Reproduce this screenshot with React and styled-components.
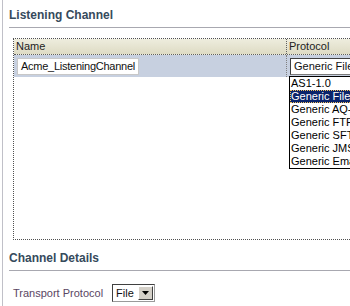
import React from 'react';
import styled, { createGlobalStyle } from 'styled-components';

const Global = createGlobalStyle`
  html, body { margin: 0; padding: 0; background: #fff; }
  body { font-family: "Liberation Sans", Arial, sans-serif; font-size: 11px; }
`;

const Page = styled.div`
  margin-left: 2px;
  border-left: 1px solid #c0c0c8;
  padding-left: 6px;
  height: 306px;
  box-sizing: border-box;
  overflow: hidden;
`;

const Heading = styled.div`
  font-weight: bold;
  font-size: 12px;
  color: #364a5c;
  padding-top: ${({ top }) => top}px;
  padding-bottom: 4px;
  border-bottom: 1px solid #a8a8b0;
  line-height: 15px;
  white-space: nowrap;
`;

const Table = styled.div`
  position: relative;
  margin: 10px 0 0 4px;
  height: 202px;
  border: 1px dotted #505050;
  border-right: none;
  box-sizing: border-box;
`;

const HeaderRow = styled.div`
  display: flex;
  height: 15px;
  background: linear-gradient(#eeedde, #dedbc4);
  border-bottom: 1px dotted #606060;
`;

const HeadCell = styled.div`
  width: ${({ w }) => (w ? `${w}px` : 'auto')};
  flex: ${({ w }) => (w ? 'none' : 1)};
  padding-left: 2px;
  line-height: 15px;
  color: #222;
  border-right: ${({ divider }) => (divider ? '1px dotted #606060' : 'none')};
  box-sizing: border-box;
`;

const DataRow = styled.div`
  display: flex;
  height: 22px;
  background: #c7d0e0;
`;

const Cell = styled.div`
  width: ${({ w }) => (w ? `${w}px` : 'auto')};
  flex: ${({ w }) => (w ? 'none' : 1)};
  padding: 3px 0 0 3px;
  box-sizing: border-box;
  border-right: ${({ divider }) => (divider ? '1px dotted #808080' : 'none')};
`;

const TextInput = styled.div`
  width: 122px;
  height: 17px;
  background: #fff;
  border: 1px solid #c8c8c8;
  box-sizing: border-box;
  padding-left: 3px;
  line-height: 15px;
  letter-spacing: -0.25px;
  color: #111;
  white-space: nowrap;
`;

const SelectBox = styled.div`
  width: 80px;
  height: 17px;
  background: #fff;
  border: 1px solid #7a7a7a;
  border-top-color: #404040;
  border-left-color: #404040;
  box-sizing: border-box;
  padding-left: 3px;
  line-height: 15px;
  color: #111;
  white-space: nowrap;
  overflow: hidden;
`;

const List = styled.div`
  position: absolute;
  left: 275px;
  top: 37px;
  width: 80px;
  background: #fff;
  border: 1px solid #000;
  z-index: 2;
`;

const Option = styled.div`
  height: 13px;
  line-height: 13px;
  padding-left: 1px;
  white-space: nowrap;
  overflow: hidden;
  color: ${({ selected }) => (selected ? '#fff' : '#000')};
  background: ${({ selected }) => (selected ? '#0a246a' : 'transparent')};
  outline: ${({ selected }) => (selected ? '1px dotted #f0c060' : 'none')};
  outline-offset: -1px;
`;

const FieldRow = styled.div`
  display: flex;
  align-items: center;
  gap: 9px;
  margin: 13px 0 0 4px;
`;

const Label = styled.span`
  color: #5a4663;
`;

const Combo = styled.div`
  display: flex;
  align-items: center;
  height: 18px;
  border: 1px solid #404040;
  border-right-color: #9a9a9a;
  border-bottom-color: #9a9a9a;
  box-sizing: border-box;
  background: #fff;
`;

const ComboText = styled.span`
  padding: 0 4px 0 3px;
  color: #111;
`;

const ComboButton = styled.div`
  width: 15px;
  height: 14px;
  margin-right: 1px;
  background: #d4d0c8;
  border: 1px solid #fff;
  border-right-color: #404040;
  border-bottom-color: #404040;
  box-sizing: border-box;
  display: flex;
  align-items: center;
  justify-content: center;
`;

const options = ['AS1-1.0', 'Generic File-1.0', 'Generic AQ-1.0', 'Generic FTP-1.0', 'Generic SFTP-1.0', 'Generic JMS-1.0', 'Generic Email-1.0'];

export default function App() {
  return (
    <>
      <Global />
      <Page>
        <Heading top={8}>Listening Channel</Heading>
        <Table>
          <HeaderRow>
            <HeadCell w={273} divider>Name</HeadCell>
            <HeadCell>Protocol</HeadCell>
          </HeaderRow>
          <DataRow>
            <Cell w={273} divider>
              <TextInput>Acme_ListeningChannel</TextInput>
            </Cell>
            <Cell>
              <SelectBox>Generic File-1.0</SelectBox>
            </Cell>
          </DataRow>
          <List>
            {options.map((o, i) => (
              <Option key={o} selected={i === 1}>{o}</Option>
            ))}
          </List>
        </Table>
        <Heading top={11}>Channel Details</Heading>
        <FieldRow>
          <Label>Transport Protocol</Label>
          <Combo>
            <ComboText>File</ComboText>
            <ComboButton>
              <svg width="7" height="4" viewBox="0 0 7 4">
                <path d="M0 0h7L3.5 4z" fill="#000" />
              </svg>
            </ComboButton>
          </Combo>
        </FieldRow>
      </Page>
    </>
  );
}
